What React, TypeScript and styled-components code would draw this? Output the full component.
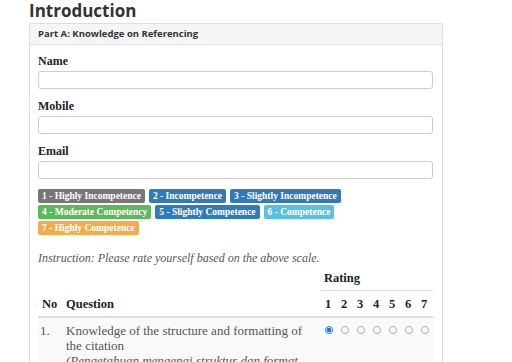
import React from 'react';
import styled, { createGlobalStyle } from 'styled-components';

const GlobalStyle = createGlobalStyle`
  body {
    margin: 0;
    background: #fff;
    font-family: 'Liberation Serif', 'DejaVu Serif', serif;
    color: #333;
  }
`;

const Page = styled.div`
  width: 414px;
  margin-left: 29px;
`;

const Title = styled.h1`
  margin: 0;
  height: 23px;
  font-family: 'Open Sans', sans-serif;
  font-size: 17px;
  line-height: 21px;
  font-weight: 700;
  color: #333;
`;

const Panel = styled.div`
  border: 1px solid #ddd;
  border-bottom: none;
  border-radius: 3px 3px 0 0;
`;

const PanelHeading = styled.div`
  height: 20px;
  padding: 0 8px;
  background: #f5f5f5;
  border-bottom: 1px solid #ddd;
  font-family: 'Open Sans', sans-serif;
  font-size: 9.5px;
  font-weight: 700;
  line-height: 20px;
  color: #333;
`;

const PanelBody = styled.div`
  padding: 8px 9px 0 8px;
`;

const Field = styled.div`
  margin-bottom: 9px;
`;

const Label = styled.label`
  display: block;
  font-size: 12px;
  font-weight: 700;
  line-height: 17px;
  margin-bottom: 1px;
  color: #222;
`;

const Input = styled.input`
  display: block;
  box-sizing: border-box;
  width: 100%;
  height: 18px;
  border: 1px solid #ccc;
  border-radius: 3px;
  background: #fff;
`;

const Scale = styled.div`
  display: flex;
  flex-wrap: wrap;
  gap: 2px 4px;
  margin-top: 10px;
  width: 340px;
`;

const Badge = styled.span<{ $bg: string }>`
  display: inline-block;
  height: 14px;
  padding: 0 4px;
  border-radius: 2px;
  background: ${(p) => p.$bg};
  color: #fff;
  font-size: 9.5px;
  font-weight: 700;
  line-height: 14px;
  white-space: nowrap;
`;

const Instruction = styled.p`
  margin: 15px 0 0;
  font-size: 12px;
  font-style: italic;
  line-height: 16px;
  color: #555;
`;

const Table = styled.table`
  width: 100%;
  margin-top: 2px;
  border-collapse: collapse;
  table-layout: fixed;
`;

const RatingHead = styled.th`
  padding: 2px 0 4px 3px;
  text-align: left;
  font-size: 12.5px;
  font-weight: 700;
  line-height: 16px;
  border-bottom: 1px solid #ddd;
  color: #222;
`;

const Th = styled.th<{ $pad?: number }>`
  padding: 6px 0 5px ${(p) => p.$pad ?? 3}px;
  text-align: left;
  font-size: 12.5px;
  font-weight: 700;
  line-height: 14px;
  border-bottom: 2px solid #ddd;
  color: #222;
  white-space: nowrap;
`;

const Row = styled.tr`
  background: #f9f9f9;
`;

const Td = styled.td<{ $pad?: number }>`
  padding: 5px 8px 0 ${(p) => p.$pad ?? 3}px;
  vertical-align: top;
  font-size: 13px;
  line-height: 15px;
  color: #555;
`;

const RadioCell = styled.td`
  padding: 8px 0 0 4px;
  vertical-align: top;
`;

const Radio = styled.span<{ $on?: boolean }>`
  display: block;
  box-sizing: border-box;
  width: 8px;
  height: 8px;
  border-radius: 50%;
  border: 1px solid ${(p) => (p.$on ? '#1a73e8' : '#aaa')};
  background: ${(p) => (p.$on ? 'radial-gradient(circle, #1a73e8 0 2px, #fff 2.5px)' : '#fff')};
`;

const Translation = styled.div`
  font-style: italic;
`;

const scale = [
  { text: '1 - Highly Incompetence', bg: '#777777' },
  { text: '2 - Incompetence', bg: '#337ab7' },
  { text: '3 - Slightly Incompetence', bg: '#337ab7' },
  { text: '4 - Moderate Competency', bg: '#5cb85c' },
  { text: '5 - Slightly Competence', bg: '#337ab7' },
  { text: '6 - Competence', bg: '#5bc0de' },
  { text: '7 - Highly Competence', bg: '#f0ad4e' },
];

const points = [1, 2, 3, 4, 5, 6, 7];

export default function App() {
  return (
    <>
      <GlobalStyle />
      <Page>
        <Title>Introduction</Title>
        <Panel>
          <PanelHeading>Part A: Knowledge on Referencing</PanelHeading>
          <PanelBody>
            {['Name', 'Mobile', 'Email'].map((f) => (
              <Field key={f}>
                <Label>{f}</Label>
                <Input type="text" />
              </Field>
            ))}
            <Scale>
              {scale.map((s) => (
                <Badge key={s.text} $bg={s.bg}>
                  {s.text}
                </Badge>
              ))}
            </Scale>
            <Instruction>Instruction: Please rate yourself based on the above scale.</Instruction>
            <Table>
              <colgroup>
                <col style={{ width: 25 }} />
                <col />
                {points.map((p) => (
                  <col key={p} style={{ width: 16 }} />
                ))}
              </colgroup>
              <thead>
                <tr>
                  <th />
                  <th />
                  <RatingHead colSpan={7}>Rating</RatingHead>
                </tr>
                <tr>
                  <Th $pad={4}>No</Th>
                  <Th>Question</Th>
                  {points.map((p) => (
                    <Th key={p} $pad={4}>
                      {p}
                    </Th>
                  ))}
                </tr>
              </thead>
              <tbody>
                <Row>
                  <Td $pad={2}>1.</Td>
                  <Td>
                    Knowledge of the structure and formatting of the citation
                    <Translation>(Pengetahuan mengenai struktur dan format sitasi)</Translation>
                  </Td>
                  {points.map((p) => (
                    <RadioCell key={p}>
                      <Radio $on={p === 1} />
                    </RadioCell>
                  ))}
                </Row>
              </tbody>
            </Table>
          </PanelBody>
        </Panel>
      </Page>
    </>
  );
}
